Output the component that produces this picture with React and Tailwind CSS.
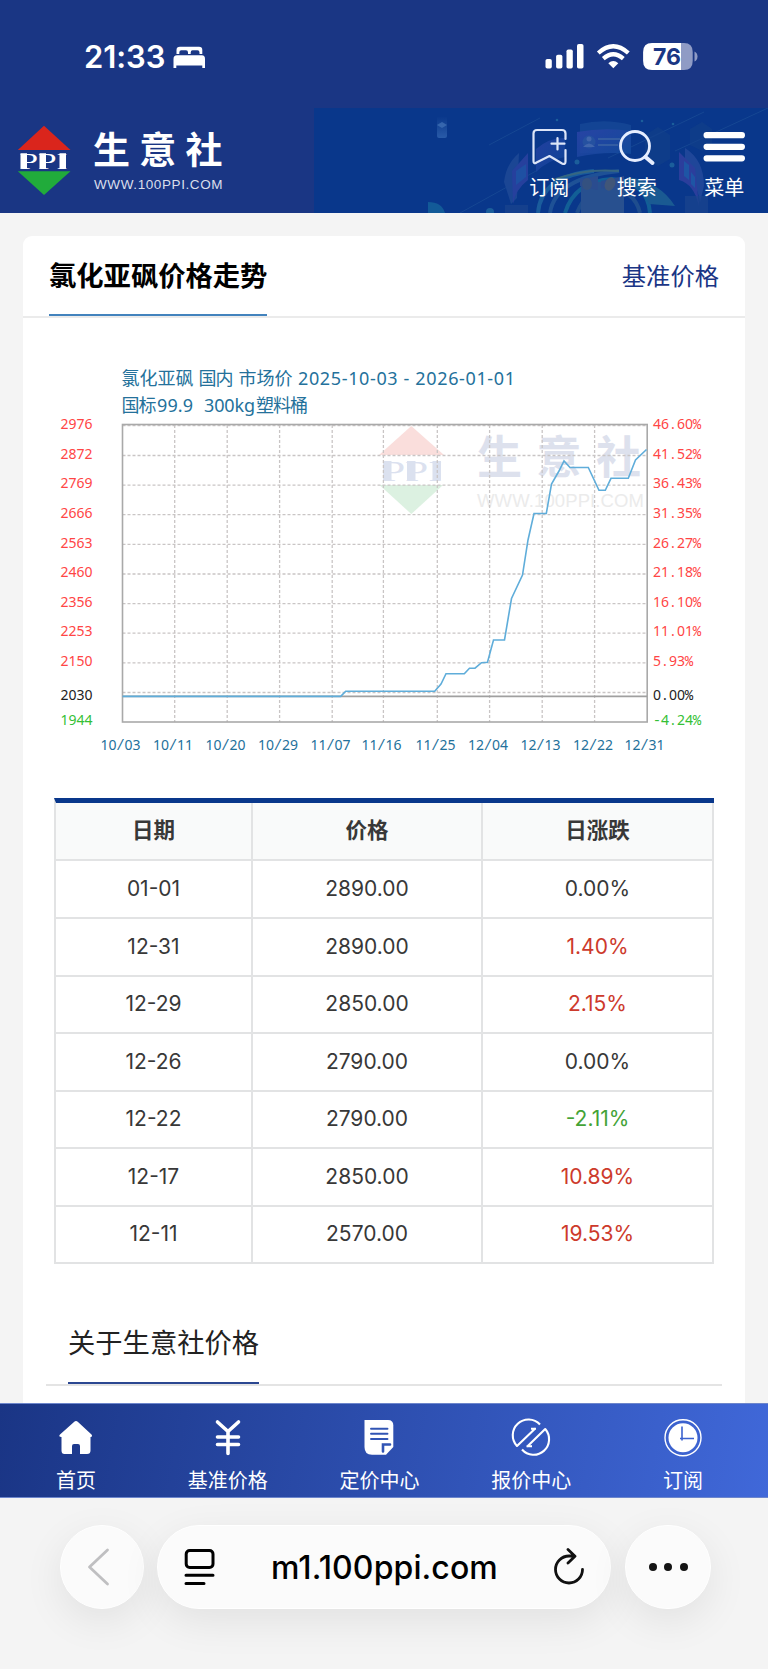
import React from 'react';

const CJK = "'Noto Sans CJK SC', sans-serif";

const rows = [
  { date: '01-01', price: '2890.00', change: '0.00%' },
  { date: '12-31', price: '2890.00', change: '1.40%' },
  { date: '12-29', price: '2850.00', change: '2.15%' },
  { date: '12-26', price: '2790.00', change: '0.00%' },
  { date: '12-22', price: '2790.00', change: '-2.11%' },
  { date: '12-17', price: '2850.00', change: '10.89%' },
  { date: '12-11', price: '2570.00', change: '19.53%' },
];

const levels = [
  { y: 429, price: '2976', percent: '46.60%', color: '#ff4545' },
  { y: 458.5, price: '2872', percent: '41.52%', color: '#ff4545' },
  { y: 488, price: '2769', percent: '36.43%', color: '#ff4545' },
  { y: 517.5, price: '2666', percent: '31.35%', color: '#ff4545' },
  { y: 547.5, price: '2563', percent: '26.27%', color: '#ff4545' },
  { y: 577, price: '2460', percent: '21.18%', color: '#ff4545' },
  { y: 606.5, price: '2356', percent: '16.10%', color: '#ff4545' },
  { y: 636, price: '2253', percent: '11.01%', color: '#ff4545' },
  { y: 665.5, price: '2150', percent: '5.93%', color: '#ff4545' },
  { y: 699.5, price: '2030', percent: '0.00%', color: '#222222' },
  { y: 725, price: '1944', percent: '-4.24%', color: '#35bf35' },
];

const dates = [
  { x: 100.5, label: '10/03' },
  { x: 153, label: '10/11' },
  { x: 205.5, label: '10/20' },
  { x: 258, label: '10/29' },
  { x: 310.5, label: '11/07' },
  { x: 361.5, label: '11/16' },
  { x: 415.5, label: '11/25' },
  { x: 468, label: '12/04' },
  { x: 520.5, label: '12/13' },
  { x: 573, label: '12/22' },
  { x: 624.5, label: '12/31' },
];

const gridX = [174.7, 227.2, 279.6, 332.2, 383.4, 437.3, 489.6, 542.2, 594.6];
const gridY = [425.7, 455.5, 485.2, 514.7, 544.4, 574, 603.6, 633.2, 662.8, 692.5];

function changeColor(value) {
  if (value.startsWith('-')) return 'text-[#44a337]';
  if (value === '0.00%') return 'text-[#383838]';
  return 'text-[#cd3a2c]';
}

// every character sits in its own 8px wide cell
function MonoText({ x, y, fill, children }) {
  const xs = children.split('').map((_, i) => x + 4 + i * 8).join(' ');
  return (
    <text x={xs} y={y} fill={fill} fontSize="14" textAnchor="middle" fontFamily="'Noto Sans', sans-serif">
      {children.split(/([%/-])/).filter(Boolean).map((part, i) =>
        /[%/-]/.test(part)
          ? <tspan key={i} fontFamily="'Liberation Mono', monospace">{part}</tspan>
          : part
      )}
    </text>
  );
}

function StatusBar() {
  return (
    <div className="flex h-[108px] items-start justify-between bg-[#1a3684] pl-[84px] pr-[70px] pt-[40px]">
      <div className="flex items-center">
        <span className="w-[81px] whitespace-nowrap font-['Inter'] text-[31px] font-semibold leading-[34px] tracking-[-0.1px] text-white">21:33</span>
        <svg className="ml-2 mt-[1px]" width="33" height="23" viewBox="0 0 33 23" fill="#fff">
          <path d="M3.5 8V4Q3.5 .8 7 .8H26Q29.3 .8 29.3 4V8H26.5V6.5Q26.5 4.3 24.5 4.3H19.5Q17.7 4.3 17.7 6.5V8H15V6.5Q15 4.3 13 4.3H8.3Q6.3 4.3 6.3 6.5V8Z" />
          <path d="M.5 13Q.5 9.3 4 9.3H29Q32 9.3 32 13V22H29.3V19.5H3.3V22H.5Z" />
        </svg>
      </div>
      <svg className="mt-[2px]" width="153" height="30" viewBox="544.5 42 153 30">
        <g fill="#fff">
          <rect x="545" y="59" width="6.3" height="9.5" rx="1.8" />
          <rect x="555.6" y="54.7" width="6.3" height="13.8" rx="1.8" />
          <rect x="566" y="49.5" width="6.3" height="19" rx="1.8" />
          <rect x="576.5" y="44" width="6.5" height="24.5" rx="1.8" />
          <path d="M612.8 68.2L607.8 63.3Q612.8 58.8 617.8 63.3Z" />
        </g>
        <path d="M597.8 53Q612.8 39.5 627.8 53M602.8 58.6Q612.8 49.8 622.8 58.6" stroke="#fff" strokeWidth="4.2" fill="none" />
        <path d="M651.5 43H681V70H651.5Q642.6 70 642.6 61V52Q642.6 43 651.5 43Z" fill="#fff" />
        <path d="M681 43H683.5Q692.2 43 692.2 52V61Q692.2 70 683.5 70H681Z" fill="#8f9bc5" />
        <path d="M694 51.5Q697 53 697 56.5Q697 60 694 61.5Z" fill="#8f9bc5" />
        <text x="652.5" y="65" fontSize="23.5" fontWeight="700" fill="#1a3684" fontFamily="Inter, sans-serif" textLength="28" lengthAdjust="spacingAndGlyphs">76</text>
      </svg>
    </div>
  );
}

function Logo() {
  return (
    <div className="flex pl-[17px] pt-[17px]">
      <svg width="55" height="71" viewBox="17 125 55 71">
        <path d="M44 125.8L70.5 150H17.8Z" fill="#da251c" />
        <path d="M17.8 171.2H70.5L44 195Z" fill="#21ab3b" />
        <text x="19.5" y="168.7" fontSize="23.5" fill="#fff" fontFamily="'Liberation Serif', serif" textLength="48" lengthAdjust="spacingAndGlyphs">PPI</text>
        <path d="M20.5 153.2h6.5v15.5h-6.5zM39.5 153.2h6.5v15.5h-6.5zM59.5 153.2h6.5v15.5h-6.5z" fill="#fff" />
      </svg>
      <div className="-mt-[2px] ml-[21px] text-white">
        <div className="whitespace-nowrap font-['Noto_Sans_CJK_SC',sans-serif] text-[37px] font-bold leading-[50px] tracking-[9.3px]">生意社</div>
        <div className="mt-[3px] whitespace-nowrap pl-[1px] font-['Liberation_Sans',sans-serif] text-[13.5px] leading-[18px] tracking-[0.6px] text-[#d9deeb]">WWW.100PPI.COM</div>
      </div>
    </div>
  );
}

function HeaderArt() {
  return (
    <svg className="absolute right-0 top-0 opacity-70" width="454" height="105" viewBox="314 108 454 105" fill="none">
      <defs>
        <linearGradient id="beam" x1="0" y1="0" x2="0" y2="1">
          <stop offset="0" stopColor="#4377bf" stopOpacity="0" />
          <stop offset="1" stopColor="#4377bf" stopOpacity=".8" />
        </linearGradient>
        <linearGradient id="panel" x1="0" y1="0" x2="1" y2="1">
          <stop offset="0" stopColor="#3d49b5" />
          <stop offset="1" stopColor="#1454a5" />
        </linearGradient>
      </defs>
      <rect x="437" y="116" width="10" height="22" rx="2" fill="url(#beam)" />
      <path d="M437 125l5-3 5 3-5 3z" fill="#5d8ecb" opacity=".7" />
      <path d="M489 145L540 118M460 213L536 171M608 158L704 112M675 151L768 108" stroke="#285d9f" opacity=".6" />
      <path d="M428 202Q442 202 445 213H428Z" fill="#17699e" />
      <path d="M504 182Q506 164 519 153L517 198L511 204Z" fill="#234d99" />
      <path d="M512 171L528 153V180Q515 190 513 204Z" fill="#3344a5" />
      <path d="M516 171L526 164V177L516 185Z" fill="#275bae" />
      <path d="M536 149Q550 137 565 138V157Q548 160 536 172Z" fill="url(#panel)" opacity=".7" />
      <path d="M580 124Q605 118 631 125V153H580Z" fill="#184a98" />
      <path d="M577 132Q605 127 631 131V154Q605 151 577 157Z" fill="url(#panel)" opacity=".8" />
      <circle cx="589" cy="142" r="6.5" fill="#315caa" />
      <circle cx="589" cy="139" r="2.5" fill="#597abb" />
      <path d="M583 147Q589 140 595 147" fill="#597abb" />
      <path d="M598 139H620M598 145H618" stroke="#456dac" strokeWidth="2" />
      <path d="M645 135l13-8 12 8v24l-12 7-13-7zM690 129l12-7 10 7v16l-10 6-12-6z" fill="#174489" opacity=".6" />
      <path d="M685 148Q704 160 704 186L700 202Q696 180 685 174Z" fill="#294da0" />
      <path d="M679 152L695 168L699 206Q694 184 679 180Z" fill="#3a42a4" />
      <path d="M684 161L689 165V180L684 176ZM691 172L695 177V188L691 184Z" fill="#2862b0" />
      <g strokeWidth="4">
        <path d="M538 213Q541 176 594 171" stroke="#226ca4" />
        <path d="M550 213Q555 178 619 171" stroke="#285c9b" />
        <path d="M565 213Q575 181 612 179Q648 182 650 213" stroke="#17709b" />
        <path d="M577 213Q586 189 610 188Q635 191 640 213" stroke="#285790" />
      </g>
      <path d="M553 180Q584 168 619 171" stroke="#497b7d" strokeWidth="2" />
      <path d="M628 177Q660 182 675 206L649 204Q644 188 628 184Z" fill="#226a96" />
      <path d="M581 182H624V213H581Z" fill="#365b91" />
      <path d="M580 179L598 176V190L580 186ZM601 181L624 176V190L601 188Z" fill="#385591" />
      <ellipse cx="610" cy="184" rx="5" ry="7" transform="rotate(25 610 184)" fill="#5a6471" />
      <ellipse cx="587" cy="184" rx="5" ry="6" fill="#475d7c" />
      <path d="M685 196H708V213H685ZM505 205H528V213H505Z" fill="#244b91" opacity=".7" />
      <g fill="#246fa2">
        <circle cx="577" cy="162" r="2.5" />
        <circle cx="672" cy="165" r="2.5" />
        <circle cx="490" cy="212" r="4" />
        <circle cx="557" cy="120" r="1.3" />
        <circle cx="642" cy="121" r="1.3" />
        <circle cx="673" cy="124" r="1.3" />
      </g>
    </svg>
  );
}

function HeaderAction({ label, children }) {
  return (
    <div className="flex w-[87.5px] flex-col items-center">
      <svg width="44" height="42" viewBox="0 0 44 42" fill="none" stroke="#fff" strokeLinecap="round" strokeLinejoin="round">
        {children}
      </svg>
      <span className="mt-[4px] font-['Noto_Sans_CJK_SC',sans-serif] text-[20px] leading-[29px] text-white">{label}</span>
    </div>
  );
}

function Header() {
  return (
    <header className="relative flex h-[105px] justify-between bg-[#1a3684]">
      <div className="absolute right-0 top-0 h-[105px] w-[454px] bg-[#09378b]" />
      <HeaderArt />
      <Logo />
      <div className="relative flex pt-[18px]">
        <HeaderAction label="订阅">
          <path d="M38.5 13V7.5Q38.5 4 35 4H10Q6.5 4 6.5 7.5V35Q6.5 38.5 9.5 36.5L22.5 30L35 37.5Q38.5 39 38.5 35.5V24M30.5 12V23.5M24.5 17.7H37.5" stroke="#dce5f8" strokeWidth="2.2" />
        </HeaderAction>
        <HeaderAction label="搜索">
          <circle cx="20" cy="20" r="14.5" stroke="#e6edff" strokeWidth="2.8" />
          <path d="M30.5 31L37.5 37" stroke="#e6edff" strokeWidth="4" />
        </HeaderAction>
        <HeaderAction label="菜单">
          <path d="M4.6 9.2H39.9M4.6 20.8H39.9M4.6 32.3H39.9" strokeWidth="6.2" />
        </HeaderAction>
      </div>
    </header>
  );
}

function Watermark() {
  return (
    <g>
      <path d="M411.3 426L444 455H379Z" fill="#fadedc" />
      <path d="M379.5 485H443L411.3 514Z" fill="#dcf1e1" />
      <text x="382" y="480.5" fontSize="29" fill="#dbe1ef" fontFamily="'Liberation Serif', serif" textLength="60" lengthAdjust="spacingAndGlyphs">PPI</text>
      <path d="M383 461h8.5v19.5h-8.5zM407 461h8.5v19.5h-8.5zM432.5 461h8.5v19.5h-8.5z" fill="#dbe1ef" />
      <text x="477" y="473.5" fontSize="45" fontWeight="700" fill="#dde1ed" fontFamily={CJK} letterSpacing="14.5">生意社</text>
      <text x="477" y="507" fontSize="18.5" fill="#ebebeb" fontFamily="'Liberation Sans', sans-serif" textLength="167">WWW.100PPI.COM</text>
    </g>
  );
}

function PriceChart() {
  return (
    <svg className="block" width="722" height="480" viewBox="23 318 722 480">
      <Watermark />
      <g fill="#24719b" fontSize="18" fontFamily={`'Noto Sans', ${CJK}`}>
        <text x="121.5" y="385" textLength="72">氯化亚砜</text>
        <text x="198.5" y="385" textLength="35">国内</text>
        <text x="238.5" y="385" textLength="54">市场价</text>
        <text x="298" y="385" textLength="217">2025-10-03 - 2026-01-01</text>
        <text x="121.5" y="411.7" textLength="35">国标</text>
        <text x="157" y="411.7" textLength="36">99.9</text>
        <text x="204" y="411.7" textLength="51">300kg</text>
        <text x="256" y="411.7" textLength="52">塑料桶</text>
      </g>
      <g stroke="#c9c5c5" strokeWidth="1.3" strokeDasharray="3 2">
        {gridX.map((x) => <line key={x} x1={x} x2={x} y1="425" y2="722" />)}
        {gridY.map((y) => <line key={y} x1="122.5" x2="647" y1={y} y2={y} />)}
      </g>
      <rect x="122.5" y="424.5" width="524.7" height="297.5" fill="none" stroke="#a9a9a9" strokeWidth="1.6" />
      <line x1="122.5" x2="647" y1="696.4" y2="696.4" stroke="#a0a0a0" strokeWidth="1.6" />
      <polyline
        points="122.5,696.4 340.7,696.4 345.7,691.2 434.7,691.2 441,684 446,673.7 464.3,673.7 469.5,668.2 475,668.2 481.5,662.7 487.5,662.3 493.5,640 504.5,640 511.5,598.5 522.5,575 528,540 534,513.5 546.3,513.5 551.5,484 559,471 564,461 570,467.5 588.3,467.5 599,490.3 605.3,490.3 611,478.3 628.3,478.3 635.5,460 646.5,449.5"
        fill="none"
        stroke="#5fadda"
        strokeWidth="1.6"
      />
      {levels.map((level) => (
        <g key={level.price}>
          <MonoText x={60.5} y={level.y} fill={level.color}>{level.price}</MonoText>
          <MonoText x={653} y={level.y} fill={level.color}>{level.percent}</MonoText>
        </g>
      ))}
      {dates.map((d) => (
        <MonoText key={d.label} x={d.x} y={749.5} fill="#24719b">{d.label}</MonoText>
      ))}
    </svg>
  );
}

function PriceTable() {
  return (
    <div className="ml-[31px] w-[660px] border-l-2 border-t-[5px] border-l-[#e2e3e4] border-t-[#09378b]">
      <div className="grid h-[58px] grid-cols-[197px_230px_231px] bg-[#f9fafa] text-center font-['Noto_Sans_CJK_SC',sans-serif] text-[21.5px] font-bold leading-[52px] text-[#383838]">
        <div className="border-b-2 border-r-2 border-[#e2e3e4]">日期</div>
        <div className="border-b-2 border-r-2 border-[#e2e3e4]">价格</div>
        <div className="border-b-2 border-r-2 border-[#e2e3e4]">日涨跌</div>
      </div>
      {rows.map((row) => (
        <div key={row.date} className="grid h-[57.5px] grid-cols-[197px_230px_231px] text-center font-['Inter',sans-serif] text-[21px] leading-[56px] text-[#383838]">
          <div className="border-b-2 border-r-2 border-[#e2e3e4]">{row.date}</div>
          <div className="border-b-2 border-r-2 border-[#e2e3e4]">{row.price}</div>
          <div className={`border-b-2 border-r-2 border-[#e2e3e4] ${changeColor(row.change)}`}>{row.change}</div>
        </div>
      ))}
    </div>
  );
}

function NavItem({ label, children }) {
  return (
    <div className="flex flex-col items-center pt-[14px]">
      <svg width="40" height="40" viewBox="0 0 40 40" fill="none">{children}</svg>
      <span className="mt-[8px] whitespace-nowrap text-[20px] leading-[28px]">{label}</span>
    </div>
  );
}

function BottomNav() {
  return (
    <nav className="grid h-[95px] grid-cols-5 border-y border-[#6d86cc] bg-[linear-gradient(100deg,#1a3585,#4068d9)] pr-[9px] font-['Noto_Sans_CJK_SC',sans-serif] text-white">
      <NavItem label="首页">
        <path d="M20 3Q21 3 22 4L35.5 16.5Q37 18.5 34.5 19H34.5V32.5Q34.5 36 31 36H24V28Q24 26 22 26H18Q16 26 16 28V36H8.5Q5.5 36 5.5 32.5V19Q2 18.5 4 16.5L18 4Q19 3 20 3Z" fill="#fff" />
      </NavItem>
      <NavItem label="基准价格">
        <path d="M9.5 4L20 13.5L30.5 4M20 13.5V35.5M9.5 19H30.5M9.5 26.5H30.5" stroke="#fff" strokeWidth="3.6" strokeLinecap="round" strokeLinejoin="round" />
      </NavItem>
      <NavItem label="定价中心">
        <path d="M5.5 2H29Q34.3 2 34.3 7.5V29L27 36.8H13Q5.5 36.8 5.5 29Z" fill="#fff" />
        <path d="M12 10.8H28.5M12 15.8H28.5M12 21H28.5" stroke="#3154b4" strokeWidth="1.9" strokeLinecap="round" />
        <path d="M24 33.5V26.5H31" stroke="#3154b4" strokeWidth="2.6" strokeLinecap="round" />
      </NavItem>
      <NavItem label="报价中心">
        <g stroke="#fff" strokeWidth="2.1" strokeLinejoin="round">
          <path d="M29 6.5A15.2 15.2 0 0 0 6 28L24.5 10.2M20 10.8H25M11 31.5A15.2 15.2 0 0 0 34.2 11L16 28.8M15.5 28.3H21" />
        </g>
      </NavItem>
      <NavItem label="订阅">
        <circle cx="20" cy="19.7" r="18" stroke="#fff" strokeWidth="1.4" />
        <circle cx="20" cy="19.7" r="14.5" fill="#fff" />
        <path d="M19 8.5V22.5M17 20.5H31" stroke="#3b62cf" strokeWidth="1.6" />
      </NavItem>
    </nav>
  );
}

function BrowserBar() {
  const round = 'flex h-[84px] items-center rounded-full border border-white bg-[#fbfbfb] shadow-[0_12px_40px_rgba(0,0,0,0.08)]';
  return (
    <div className="flex h-[171px] items-start bg-[#f4f4f4] pl-[59.5px] pt-[27px]">
      <div className={`${round} w-[84px] justify-center pr-[6px]`}>
        <svg width="24" height="40" viewBox="0 0 24 40" fill="none">
          <path d="M20.5 3L2.5 20L20.5 37" stroke="#bfbfc1" strokeWidth="2.8" strokeLinecap="round" strokeLinejoin="round" />
        </svg>
      </div>
      <div className={`${round} ml-[13.5px] w-[454px] justify-between pl-[26px] pr-[26px]`}>
        <svg width="32" height="38" viewBox="0 0 32 38" fill="none" stroke="#000" strokeWidth="3" strokeLinecap="round">
          <rect x="2.2" y="2.5" width="26.8" height="17" rx="3.5" />
          <path d="M2 27.2H29M2 35.6H20" />
        </svg>
        <span className="mt-[1px] whitespace-nowrap font-['Inter',sans-serif] text-[32px] font-medium leading-[40px] tracking-[0.1px] text-black">m1.100ppi.com</span>
        <svg width="31" height="38" viewBox="0 0 31 38" fill="none" stroke="#111" strokeWidth="2.8" strokeLinecap="round" strokeLinejoin="round">
          <path d="M29.5 21.5A13.5 13.5 0 1 1 16 8H21.5M15 1.5L22 8.3L15 15" />
        </svg>
      </div>
      <div className={`${round} ml-[14px] w-[86px] justify-center gap-[7.5px]`}>
        <span className="h-[8px] w-[8px] rounded-full bg-[#141414]" />
        <span className="h-[8px] w-[8px] rounded-full bg-[#141414]" />
        <span className="h-[8px] w-[8px] rounded-full bg-[#141414]" />
      </div>
    </div>
  );
}

function App() {
  return (
    <div className="h-[1669px] w-[768px] overflow-hidden bg-[#f4f4f4]">
      <StatusBar />
      <Header />
      <main className="h-[1190px] px-[23px] pt-[23px]">
        <section className="h-[1167px] rounded-t-[9px] bg-white font-['Noto_Sans_CJK_SC',sans-serif]">
          <div className="flex h-[82px] justify-between border-b-2 border-[#ebebeb] px-[26px]">
            <h1 className="h-[80px] border-b-2 border-[#4383bd] text-[27.3px] font-bold leading-[77px] text-black">氯化亚砜价格走势</h1>
            <a className="text-[24.3px] leading-[77px] text-[#1a3585]">基准价格</a>
          </div>
          <PriceChart />
          <PriceTable />
          <div className="mx-[23px] mt-[38.5px] h-[84px] border-b-2 border-[#e4e4e4] pl-[22px]">
            <h2 className="inline-block h-[82px] border-b-2 border-[#2b4791] text-[27.3px] leading-[79px] text-[#222]">关于生意社价格</h2>
          </div>
        </section>
      </main>
      <BottomNav />
      <BrowserBar />
    </div>
  );
}

export default App;
